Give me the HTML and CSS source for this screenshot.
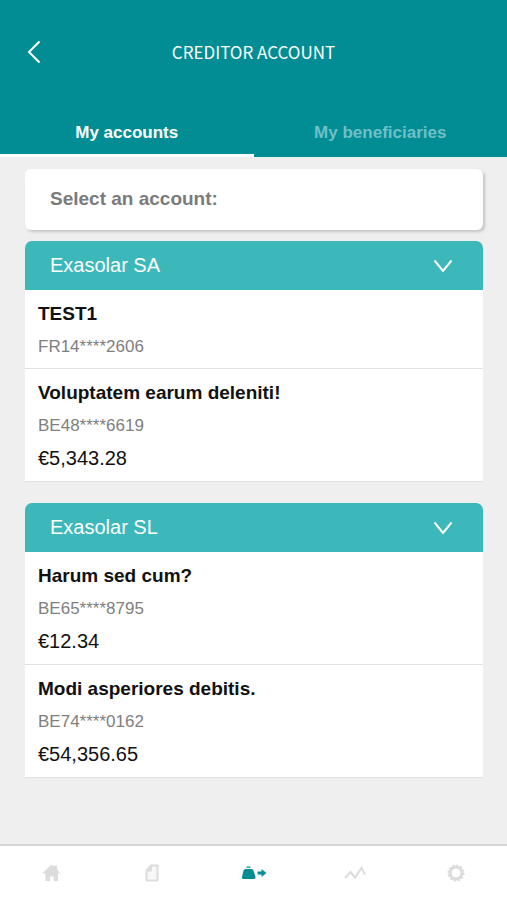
FILE: index.html
```html
<!DOCTYPE html>
<html lang="en">
<head>
<meta charset="utf-8">
<meta name="viewport" content="width=device-width, initial-scale=1">
<title>Creditor account</title>
<link rel="stylesheet" href="styles.css">
</head>
<body>
<header class="header">
  <div class="title-bar">
    <button class="back" type="button" aria-label="Back">
      <svg width="14" height="24" viewBox="0 0 14 24"><path d="M12.500 1.500 2 12l10.500 10.500"/></svg>
    </button>
    <h1 class="title">CREDITOR ACCOUNT</h1>
  </div>
  <div class="tabs" role="tablist">
    <button class="tab tab-active" type="button" role="tab" aria-selected="true">My accounts</button>
    <button class="tab" type="button" role="tab" aria-selected="false">My beneficiaries</button>
  </div>
</header>

<main class="content">
  <h2 class="prompt">Select an account:</h2>

  <section class="group">
    <button class="group-header" type="button" aria-expanded="true">
      <span>Exasolar SA</span>
      <svg class="chevron" width="20" height="14" viewBox="0 0 20 14"><path d="M1.500 1.500 10 12 18.500 1.500"/></svg>
    </button>
    <ul class="accounts">
      <li class="account">
        <div class="name">TEST1</div>
        <div class="iban">FR14****2606</div>
      </li>
      <li class="account">
        <div class="name">Voluptatem earum deleniti!</div>
        <div class="iban">BE48****6619</div>
        <div class="balance">€5,343.28</div>
      </li>
    </ul>
  </section>

  <section class="group">
    <button class="group-header" type="button" aria-expanded="true">
      <span>Exasolar SL</span>
      <svg class="chevron" width="20" height="14" viewBox="0 0 20 14"><path d="M1.500 1.500 10 12 18.500 1.500"/></svg>
    </button>
    <ul class="accounts">
      <li class="account">
        <div class="name">Harum sed cum?</div>
        <div class="iban">BE65****8795</div>
        <div class="balance">€12.34</div>
      </li>
      <li class="account">
        <div class="name">Modi asperiores debitis.</div>
        <div class="iban">BE74****0162</div>
        <div class="balance">€54,356.65</div>
      </li>
    </ul>
  </section>
</main>

<nav class="nav" aria-label="Main">
  <a class="nav-item" href="#home" aria-label="Home">
    <svg width="18" height="18" viewBox="0 0 18 18"><path class="fill" d="M9.500 .5 12 2.500V1.500h3V5l2.500 3.500V9.500H16V17h-4.500v-4.500H8V17H3.500V9.500H1V8.500Z"/></svg>
  </a>
  <a class="nav-item" href="#documents" aria-label="Documents">
    <svg width="14" height="18" viewBox="0 0 14 18"><path class="line page" d="M6 1.500h6.500v15h-11V6.500Z"/><path class="fill" d="M7 1v6.500H1Z"/></svg>
  </a>
  <a class="nav-item nav-active" href="#transfer" aria-label="Transfer" aria-current="page">
    <svg width="26" height="14" viewBox="0 0 26 14"><path class="fill" d="M5.500 .5h4v1.200h-4ZM4.500 3h6Q12 3 12.500 4.500L14.500 11Q14.800 13 13 13H2.500Q.5 13 1 11L2.500 4.500Q3 3 4.500 3ZM16.500 5.500h4V3L25.500 7l-5 4V8.500h-4Z"/></svg>
  </a>
  <a class="nav-item" href="#activity" aria-label="Activity">
    <svg width="22" height="14" viewBox="0 0 22 14"><path class="line" d="M1 12 6.500 6l4.500 5.500L17.500 2 21 8.500"/></svg>
  </a>
  <a class="nav-item" href="#settings" aria-label="Settings">
    <svg width="18" height="18" viewBox="0 0 18 18"><circle class="ring" cx="9" cy="9" r="6"/><circle class="teeth" cx="9" cy="9" r="7.600"/></svg>
  </a>
</nav>
</body>
</html>
```

FILE: styles.css
```css
* {
  box-sizing: border-box;
}

body {
  display: flex;
  flex-direction: column;
  min-height: 100vh;
  margin: 0;
  background: #efefef;
  color: #111;
  font-family: "Liberation Sans", Arial, sans-serif;
}

button {
  border: 0;
  background: none;
  font-family: inherit;
  cursor: pointer;
}

svg {
  display: block;
  fill: none;
}

.header {
  background: #018d93;
  color: #fff;
}

.title-bar {
  display: grid;
  grid-template-columns: 68px 1fr 68px;
  align-items: center;
  height: 103px;
}

.back {
  justify-self: center;
  padding: 0;
}

.back path {
  stroke: #fff;
  stroke-width: 2;
}

.title {
  margin: 0;
  font-family: "Noto Sans CJK SC", sans-serif;
  font-size: 17px;
  font-weight: 400;
  line-height: 24px;
  text-align: center;
}

.tabs {
  display: flex;
}

.tab {
  flex: 1;
  height: 54px;
  padding: 8px 0 0;
  border-bottom: 3px solid transparent;
  color: #6fc0c8;
  font-size: 17px;
  font-weight: 700;
  line-height: 20px;
}

.tab-active {
  border-color: #fff;
  color: #fff;
}

.content {
  flex: 1;
  padding: 12px 24px 40px 25px;
}

.prompt {
  margin: 0 0 11px;
  padding: 18px 25px 19px;
  border-radius: 6px;
  background: #fff;
  box-shadow: 2px 2px 3px #c4c4c4;
  color: #7b7b7b;
  font-size: 19px;
  font-weight: 700;
  line-height: 24px;
}

.group + .group {
  margin-top: 21px;
}

.group-header {
  display: flex;
  align-items: center;
  justify-content: space-between;
  width: 100%;
  height: 49px;
  padding: 0 30px 0 25px;
  border-radius: 7px 7px 0 0;
  background: #3cb8bb;
  color: #fff;
  font-size: 20px;
}

.chevron path {
  stroke: #fff;
  stroke-width: 2;
}

.accounts {
  margin: 0;
  padding: 0;
  list-style: none;
}

.account {
  padding: 7px 13px 5px;
  border-bottom: 1px solid #e2e2e2;
  background: #fff;
}

.account:has(.balance) {
  padding-bottom: 6px;
}

.name,
.iban,
.balance {
  line-height: 33px;
}

.name {
  font-size: 19px;
  font-weight: 700;
}

.iban {
  color: #808080;
  font-size: 17px;
}

.balance {
  font-size: 20px;
}

.nav {
  display: flex;
  height: 56px;
  border-top: 2px solid #d6d6d6;
  background: #fff;
  color: #dcdcdc;
}

.nav-item {
  display: flex;
  flex: 1;
  align-items: center;
  justify-content: center;
  color: inherit;
}

.nav-active {
  color: #018d93;
}

.fill {
  fill: currentColor;
}

.line {
  stroke: currentColor;
  stroke-width: 2;
}

.page {
  fill: #f8f8f8;
}

.ring {
  stroke: currentColor;
  stroke-width: 3;
}

.teeth {
  stroke: currentColor;
  stroke-width: 2;
  stroke-dasharray: 2 2;
}
```
